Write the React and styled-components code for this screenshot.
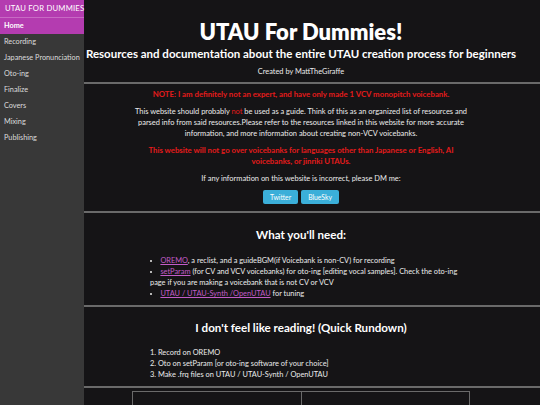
import React from "react";
import styled, { createGlobalStyle } from "styled-components";

const pages = [
	"Home",
	"Recording",
	"Japanese Pronunciation",
	"Oto-ing",
	"Finalize",
	"Covers",
	"Mixing",
	"Publishing",
];

const App = () => {
	return (
		<Page>
			<GlobalStyle />
			<Sidebar>
				<Brand>UTAU For Dummies</Brand>
				{pages.map((name, i) => (
					<NavItem key={name} active={i === 0}>
						{name}
					</NavItem>
				))}
			</Sidebar>
			<Main>
				<Header>
					<Title>UTAU For Dummies!</Title>
					<Subtitle>
						Resources and documentation about the entire UTAU creation process
						for beginners
					</Subtitle>
					<Credit>Created by MattTheGiraffe</Credit>
				</Header>
				<Divider />
				<Block>
					<Warning>
						NOTE: I am definitely not an expert, and have only made 1 VCV
						monopitch voicebank.
					</Warning>
					<Para>
						This website should probably <Red>not</Red> be used as a guide.
						Think of this as an organized list of resources and parsed info from
						said resources.Please refer to the resources linked in this website
						for more accurate information, and more information about creating
						non-VCV voicebanks.
					</Para>
					<Warning gap>
						This website will not go over voicebanks for languages other than
						Japanese or English, AI voicebanks, or jinriki UTAUs.
					</Warning>
					<Para>If any information on this website is incorrect, please DM me:</Para>
					<Buttons>
						<Button>Twitter</Button>
						<Button>BlueSky</Button>
					</Buttons>
				</Block>
				<Divider />
				<Block top={14}>
					<SectionTitle>What you'll need:</SectionTitle>
					<List>
						<li>
							<Link>OREMO</Link>, a reclist, and a guideBGM(if Voicebank is
							non-CV) for recording
						</li>
						<li>
							<Link>setParam</Link> (for CV and VCV voicebanks) for oto-ing
							[editing vocal samples]. Check the oto-ing page if you are making
							a voicebank that is not CV or VCV
						</li>
						<li>
							<Link>UTAU / UTAU-Synth /OpenUTAU</Link> for tuning
						</li>
					</List>
				</Block>
				<Divider />
				<Block top={13}>
					<SectionTitle>I don't feel like reading! (Quick Rundown)</SectionTitle>
					<Steps>
						<li>Record on OREMO</li>
						<li>Oto on setParam [or oto-ing software of your choice]</li>
						<li>Make .frq files on UTAU / UTAU-Synth / OpenUTAU</li>
					</Steps>
				</Block>
				<Divider />
				<TableWrap>
					<Table>
						<tbody>
							<tr>
								<Cell />
								<Cell />
							</tr>
						</tbody>
					</Table>
				</TableWrap>
			</Main>
		</Page>
	);
};

export default App;

const GlobalStyle = createGlobalStyle`
	html, body {
		margin: 0;
		padding: 0;
		background: #151416;
		overflow: hidden;
	}
	body {
		font-family: "Lato", "Noto Sans", sans-serif;
	}
`;

const Page = styled.div`
	display: flex;
	height: 100vh;
	overflow: hidden;
`;

const Sidebar = styled.nav`
	width: 84px;
	flex-shrink: 0;
	background-color: #383838;
	display: flex;
	flex-direction: column;
`;

const Brand = styled.div`
	height: 17px;
	line-height: 17px;
	padding-left: 5px;
	background-color: #b43cb0;
	border-bottom: 1px solid #c86ac4;
	color: white;
	font-size: 7.7px;
	text-transform: uppercase;
	letter-spacing: 0.2px;
	white-space: nowrap;
`;

const NavItem = styled.div`
	height: 16px;
	line-height: 16px;
	padding-left: 4px;
	font-size: 7.3px;
	white-space: nowrap;
	color: ${({ active }) => (active ? "white" : "#dcdcdc")};
	font-weight: ${({ active }) => (active ? 700 : 400)};
	background-color: ${({ active }) => (active ? "#b43cb0" : "transparent")};
`;

const Main = styled.main`
	flex: 1;
	display: flex;
	flex-direction: column;
	color: #ececec;
`;

const Header = styled.header`
	padding: 20px 22px 5px 0;
	display: flex;
	flex-direction: column;
	align-items: center;
	text-align: center;
`;

const Title = styled.h1`
	margin: 0;
	font-size: 22px;
	line-height: 24px;
	font-weight: 800;
	color: white;
`;

const Subtitle = styled.h2`
	margin: 3px 0 0;
	font-size: 11.5px;
	line-height: 14px;
	font-weight: 700;
	color: white;
	white-space: nowrap;
`;

const Credit = styled.div`
	margin-top: 6px;
	font-size: 7.4px;
	line-height: 10px;
`;

const Divider = styled.hr`
	margin: 0;
	border: none;
	height: 2px;
	background-color: #6a6a6a;
	flex-shrink: 0;
`;

const Block = styled.section`
	width: 340px;
	margin: 0 auto;
	padding: ${({ top }) => top || 5}px 0 6px;
	position: relative;
	left: -11px;
	text-align: center;
`;

const Warning = styled.p`
	margin: ${({ gap }) => (gap ? "6px" : "0")} 0 0;
	color: #e31b1b;
	font-weight: 700;
	font-size: 7.8px;
	line-height: 11px;
`;

const Red = styled.span`
	color: #e31b1b;
`;

const Para = styled.p`
	margin: 6px 0 0;
	font-size: 7.45px;
	line-height: 11px;
`;

const Buttons = styled.div`
	display: flex;
	justify-content: center;
	gap: 3px;
	margin-top: 6px;
	padding-bottom: 1px;
`;

const Button = styled.button`
	height: 14px;
	padding: 0 7px;
	border: none;
	border-radius: 2px;
	background-color: #3bafd9;
	color: white;
	font-family: inherit;
	font-size: 6.8px;
`;

const SectionTitle = styled.h3`
	margin: 0;
	font-size: 11.6px;
	line-height: 16px;
	font-weight: 700;
	color: white;
`;

const List = styled.ul`
	margin: 12px 0 0;
	padding: 0 0 0 19px;
	list-style-position: inside;
	text-align: left;
	font-size: 7.4px;
	line-height: 11px;
`;

const Steps = styled.ol`
	margin: 11px 0 0;
	padding: 0 0 0 19px;
	list-style-position: inside;
	text-align: left;
	font-size: 7.4px;
	line-height: 11px;
`;

const Link = styled.a`
	color: #c25cc8;
	text-decoration: underline;
`;

const TableWrap = styled.div`
	width: 338px;
	margin: 3px auto 0;
	position: relative;
	left: -11px;
`;

const Table = styled.table`
	width: 100%;
	border-collapse: collapse;
`;

const Cell = styled.td`
	height: 40px;
	border: 1px solid #6a6a6a;
`;
